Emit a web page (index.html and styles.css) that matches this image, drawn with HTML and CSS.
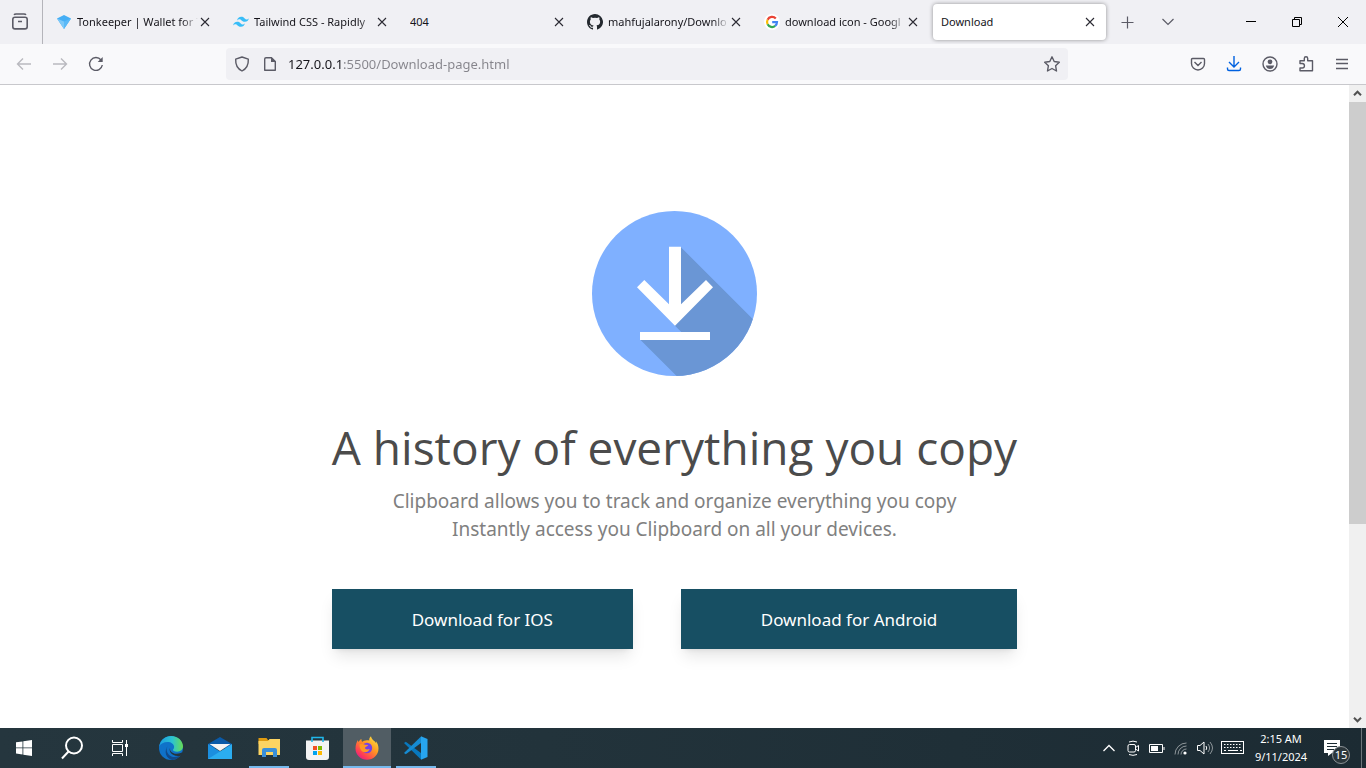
FILE: index.html
```html
<!DOCTYPE html>
<html lang="en">
<head>
<meta charset="utf-8">
<meta name="viewport" content="width=device-width, initial-scale=1">
<title>Download</title>
<link rel="stylesheet" href="styles.css">
</head>
<body>
<div class="desktop">
  <header class="tabstrip">
    <button class="view-btn" aria-label="Firefox View">
      <svg class="i18 line" viewBox="0 0 18 18"><path d="M3 1.8Q3.500 1 5 1h8q1.500 0 2 .8"/><rect x="1.800" y="4.300" width="14.400" height="11.600" rx="2.200" stroke-width="1.600"/><path d="M7 8.500h4" stroke-width="1.500"/></svg>
    </button>
    <nav class="tabs" aria-label="Tabs">
      <div class="tab">
        <svg class="i16" viewBox="0 0 16 16"><path fill="#45aef5" d="M1 4.500 8 1l7 3.500L8 15z"/><path fill="#7cc8f8" d="M1 4.500 8 7.500V15z"/><path fill="#5ab9f7" d="M15 4.500 8 7.500V15z"/></svg>
        <a class="tab-title fade" href="#">Tonkeeper | Wallet for T</a>
        <button class="tab-close" aria-label="Close tab"><svg class="i10 dark" viewBox="0 0 10 10"><path d="m1 1 8 8M9 1 1 9"/></svg></button>
      </div>
      <div class="tab">
        <svg class="i16" viewBox="0 0 16 16"><path fill="#38bdf8" d="M4 6.400Q5 2.800 8.200 2.800c3 0 3.400 2.300 5 2.600Q14.800 5.700 16 4.200 15 7.800 11.900 7.800c-3.100 0-3.400-2.300-5-2.600Q5.300 4.900 4 6.400zM0 11.400q1-3.600 4.200-3.600c3 0 3.400 2.300 5 2.600q1.600.3 2.800-1.200-1 3.600-4.100 3.600c-3.100 0-3.400-2.300-5-2.600Q1.300 9.900 0 11.400z"/></svg>
        <a class="tab-title fade" href="#">Tailwind CSS - Rapidly</a>
        <button class="tab-close" aria-label="Close tab"><svg class="i10 dark" viewBox="0 0 10 10"><path d="m1 1 8 8M9 1 1 9"/></svg></button>
      </div>
      <div class="tab">
        <a class="tab-title" href="#">404</a>
        <button class="tab-close" aria-label="Close tab"><svg class="i10 dark" viewBox="0 0 10 10"><path d="m1 1 8 8M9 1 1 9"/></svg></button>
      </div>
      <div class="tab">
        <svg class="i16" viewBox="0 0 16 16"><path fill="#24292f" d="M8 0C3.580 0 0 3.580 0 8c0 3.540 2.290 6.530 5.470 7.590.4.070.55-.17.55-.38v-1.490C4 14.090 3.480 13.220 3.320 12.770c-.09-.23-.48-.94-.82-1.130-.28-.15-.68-.52-.01-.53.63-.01 1.080.58 1.230.82.72 1.210 1.870.87 2.330.66.07-.52.28-.87.51-1.070-1.780-.2-3.640-.89-3.640-3.950 0-.87.31-1.590.82-2.150-.08-.2-.36-1.020.08-2.120 0 0 .67-.21 2.200.82a7.500 7.500 0 0 1 4 0c1.530-1.040 2.200-.82 2.200-.82.44 1.100.16 1.920.08 2.120.51.56.82 1.270.82 2.150 0 3.070-1.870 3.750-3.650 3.950.29.25.54.73.54 1.480v2.200c0 .21.15.46.55.38A8 8 0 0 0 8 0z"/></svg>
        <a class="tab-title fade" href="#">mahfujalarony/Downlo</a>
        <button class="tab-close" aria-label="Close tab"><svg class="i10 dark" viewBox="0 0 10 10"><path d="m1 1 8 8M9 1 1 9"/></svg></button>
      </div>
      <div class="tab">
        <svg class="i16" viewBox="0 0 16 16"><circle cx="8" cy="8" r="8" fill="#fff"/><g fill="none" stroke-width="2.200"><path stroke="#ea4335" d="M11.800 4.500A5 5 0 0 0 3.600 5.700"/><path stroke="#fbbc05" d="M3.600 5.700a5 5 0 0 0 0 4.600"/><path stroke="#34a853" d="M3.600 10.300a5 5 0 0 0 7.600 1.600"/><path stroke="#4285f4" d="M11.200 11.900Q13 10.400 13 8.100H8.200"/></g></svg>
        <a class="tab-title fade" href="#">download icon - Googl</a>
        <button class="tab-close" aria-label="Close tab"><svg class="i10 dark" viewBox="0 0 10 10"><path d="m1 1 8 8M9 1 1 9"/></svg></button>
      </div>
      <div class="tab active">
        <a class="tab-title" href="#" aria-current="page">Download</a>
        <button class="tab-close" aria-label="Close tab"><svg class="i10 dark" viewBox="0 0 10 10"><path d="m1 1 8 8M9 1 1 9"/></svg></button>
      </div>
    </nav>
    <div class="tab-tools">
      <button class="tool" aria-label="New tab"><svg class="i16 line thin" viewBox="0 0 16 16"><path d="M7.500 2.500v12M1.500 8.500h12"/></svg></button>
      <button class="tool" aria-label="List all tabs"><svg class="i16 line thin" viewBox="0 0 16 16"><path d="m2.500 5 5.500 5.500L13.500 5"/></svg></button>
    </div>
    <div class="window-controls">
      <button class="win" aria-label="Minimize"><svg class="i12 black" viewBox="0 0 12 12"><path d="M1 5.500h10"/></svg></button>
      <button class="win" aria-label="Restore"><svg class="i12 black" viewBox="0 0 12 12"><path d="M1.500 3.500h7v7h-7zM3.500 3.500v-2h7v7h-2"/></svg></button>
      <button class="win" aria-label="Close window"><svg class="i12 black" viewBox="0 0 12 12"><path d="m1 1 10 10M11 1 1 11"/></svg></button>
    </div>
  </header>

  <div class="navbar">
    <div class="nav-group">
      <button class="tool" aria-label="Back"><svg class="i16 line faded" viewBox="0 0 16 16"><path d="M15 8H1.500M7 2.500 1.500 8 7 13.500"/></svg></button>
      <button class="tool" aria-label="Forward"><svg class="i16 line faded" viewBox="0 0 16 16"><path d="M1 8h13.500M9 2.500 14.500 8 9 13.500"/></svg></button>
      <button class="tool" aria-label="Reload"><svg class="i16 line" viewBox="0 0 16 16"><path d="M13 4A6.400 6.400 0 1 0 14.300 9"/><path d="M14.700 1v5H9.700z" fill="#5b5b66" stroke="none"/></svg></button>
    </div>
    <div class="urlbar">
      <svg class="i16 line" viewBox="0 0 16 16"><path d="M8 1 14.300 3.200Q14.800 11.500 8 15 1.200 11.500 1.700 3.200z" stroke-linejoin="round"/></svg>
      <svg class="i16 line" viewBox="0 0 16 16"><path d="M4 1.700h5.500L13.300 5.500v8.800H2.700V3q0-1.300 1.300-1.300z" stroke-linejoin="round"/><path d="M9 1v5h5z" fill="#5b5b66" stroke="none"/></svg>
      <input class="url" type="text" aria-label="Address" value="127.0.0.1:5500/Download-page.html">
      <button class="star" aria-label="Bookmark this page"><svg class="i16 line" viewBox="0 0 16 16"><path stroke-linejoin="round" d="m8 .8 2.200 4.700 5.100.7-3.700 3.500.9 5.300L8 12.500l-4.500 2.500.9-5.300L.7 6.200l5.100-.7z"/></svg></button>
    </div>
    <div class="nav-group">
      <button class="tool" aria-label="Save to Pocket"><svg class="i16 line" viewBox="0 0 16 16"><path d="M2.500 2.500h11q1 0 1 1V7.500a6.500 6.500 0 0 1-13 0v-4q0-1 1-1zM4.500 6 8 9.500 11.500 6"/></svg></button>
      <button class="tool" aria-label="Downloads"><svg class="i16 line accent" viewBox="0 0 16 16"><path d="M8 0v10.500M3 6l5 5 5-5M1.500 11.500v1.500q0 1.500 1.500 1.500h10q1.500 0 1.500-1.500v-1.500"/></svg></button>
      <button class="tool" aria-label="Account"><svg class="i16 line" viewBox="0 0 16 16"><circle cx="8" cy="8" r="7"/><circle cx="8" cy="5.800" r="2.400" fill="#5b5b66" stroke="none"/><path d="M3.800 9.500h8.400q-1 3.500-4.200 3.500t-4.200-3.500z" fill="#5b5b66" stroke="none"/></svg></button>
      <button class="tool" aria-label="Extensions"><svg class="i16 line" viewBox="0 0 16 16"><path stroke-linejoin="round" d="M2 7.500V4.700h4.300V2.500a1.700 1.700 0 0 1 3.400 0v2.200h4.800v10H2V12h2.200a2.200 2.200 0 0 0 0-4.500z"/></svg></button>
      <button class="tool" aria-label="Menu"><svg class="i16 line" viewBox="0 0 16 16"><path d="M2 3.500h12M2 7.500h12M2 12.500h12"/></svg></button>
    </div>
  </div>

  <div class="viewport">
    <main class="page">
      <section class="hero">
        <svg class="hero-icon" viewBox="0 0 165 165" role="img" aria-label="Download">
          <defs><clipPath id="disc"><circle cx="82.500" cy="82.500" r="82.500"/></clipPath></defs>
          <g clip-path="url(#disc)">
            <path fill="#7fb0ff" d="M0 0h165v165H0z"/>
            <path fill="#6a96d5" d="M83 36h5.700L200 147.300V280L48 128.500l70 .5v-8H89.300L83 114.700z"/>
          </g>
          <path fill="#fff" d="M77 35.700h12v57.600L114 69l7 7.300-38 38.400-38-38.400 7.300-7.300L77 93.300zM48 121h70v8H48z"/>
        </svg>
        <h1 class="headline">A history of everything you copy</h1>
        <p class="lead">Clipboard allows you to track and organize everything you copy<br>Instantly access you Clipboard on all your devices.</p>
        <div class="actions">
          <button class="cta">Download for IOS</button>
          <button class="cta">Download for Android</button>
        </div>
      </section>
    </main>
    <div class="scrollbar">
      <button class="scroll-arrow" aria-label="Scroll up"><svg class="i9" viewBox="0 0 9 9"><path d="m1 6.200 3.500-3.500L8 6.200"/></svg></button>
      <div class="scroll-track"><div class="scroll-thumb"></div></div>
      <button class="scroll-arrow" aria-label="Scroll down"><svg class="i9" viewBox="0 0 9 9"><path d="m1 2.800 3.500 3.500L8 2.800"/></svg></button>
    </div>
  </div>

  <footer class="taskbar">
    <div class="system-apps">
      <button class="app" aria-label="Start"><svg class="i16" viewBox="0 0 16 16"><path fill="#fff" d="M0 2.300 6.500 1.400v6.100H0zM7.300 1.200 16 0v7.500H7.300zM0 8.300h6.500v6.200L0 13.600zM7.300 8.300H16V16l-8.700-1.300z"/></svg></button>
      <button class="app" aria-label="Search"><svg class="i24" viewBox="0 0 24 24" fill="none" stroke="#fff" stroke-width="2"><circle cx="14" cy="9.500" r="8"/><path d="M8.500 15.500 2 22.500"/></svg></button>
      <button class="app" aria-label="Task view"><svg class="i18" viewBox="0 0 18 18" fill="none" stroke="#fff"><path d="M1.500 1v2.500h10V1M1.500 17v-2.500h10V17M1.500 5.500h10v7h-10zM15.500 1v16"/><path fill="#fff" stroke="none" d="M14 5h3v3h-3z"/></svg></button>
    </div>
    <div class="pinned-apps">
      <button class="app" aria-label="Microsoft Edge"><svg class="i24" viewBox="0 0 24 24"><defs><linearGradient id="edgeTop" x1="0" x2="1"><stop offset="0" stop-color="#1b9de2"/><stop offset=".55" stop-color="#2cc3d0"/><stop offset="1" stop-color="#67dc53"/></linearGradient></defs><circle cx="12" cy="12" r="12" fill="#0f72c9"/><path fill="url(#edgeTop)" d="M.2 10.500C1.500 3.500 6.500 0 12 0c7.500 0 12 5.500 12 10.300 0 3.500-2.600 5.400-5.700 5.400-3 0-4.600-1-4.300-1.900.3-.7 1.100-1.200 1.100-3 0-2.700-3-4.800-6.600-4.800C4.800 6 1.600 7.700.2 10.500z"/><path fill="#114a8b" d="M9.500 9.300c-3.300 3-2 9.200 3 11.200 3.500 1.300 7 .2 9.600-1.900-2.100 3.500-5.400 5.400-9 5.400-5.600-1-9.300-8.700-3.600-14.700z"/><path fill="#25343c" d="M11.500 11.300c-1.700 2.800 1.200 6.400 5.600 6.500 3 .1 5-.9 6-1.500l1 1.800-1.600 1.400c-3 1-6 .7-8.500-.7-3.100-1.800-4.300-5.200-2.500-7.500z"/></svg></button>
      <button class="app" aria-label="Mail"><svg class="i24" viewBox="0 0 24 24"><path fill="#0a5aa8" d="M12 1 24 8v4H0V8z"/><path fill="#1b8fe0" d="M0 8l24 15H0z"/><path fill="#2badf0" d="M24 8v15H0z"/><path fill="#f4f4f4" d="M1.500 8h21L12 15z"/></svg></button>
      <button class="app open" aria-label="File Explorer"><svg class="i24" viewBox="0 0 24 24"><path fill="#e09b10" d="M1.500 2h8l1.500 2H23v4H1.500z"/><path fill="#fcd462" d="M1.500 5H11l1.500-2H23v16H1.500z"/><path fill="#3a8fd8" d="M7 12h11q2 0 2 2v7h-4v-5H9v5H5v-7q0-2 2-2z"/></svg></button>
      <button class="app" aria-label="Microsoft Store"><svg class="i24" viewBox="0 0 24 24"><path fill="#f3f3f3" d="M0 4.500h23V21q0 3-3 3H3q-3 0-3-3z"/><path d="M6 6V1.500h11V6" fill="none" stroke="#20b7ea" stroke-width="1.600"/><path fill="#f25022" d="M7 10h4v4H7z"/><path fill="#7fba00" d="M12 10h4v4h-4z"/><path fill="#00a4ef" d="M7 15h4v4H7z"/><path fill="#ffb900" d="M12 15h4v4h-4z"/></svg></button>
      <button class="app current" aria-label="Firefox"><svg class="i24" viewBox="0 0 24 24"><defs><linearGradient id="fox" x1="1" y1="0" x2=".2" y2="1"><stop offset="0" stop-color="#fff24a"/><stop offset=".45" stop-color="#ff9a22"/><stop offset=".8" stop-color="#ff4151"/><stop offset="1" stop-color="#e3178e"/></linearGradient></defs><path fill="url(#fox)" d="M16 .3c-1.500 1.200-2 3-1.700 4.300C10 3.800 8.200 5.300 7.500 5.800 6.500 5.600 6.300 3.800 6.500 3 5 3.700 4 5 3.500 6c-.5-.8-.6-1.700-.6-2C1.500 6 .5 9 .5 12.500a11.500 11.200 0 0 0 23 0c0-2.700-1-5.400-2.600-7.200l.3 2C20 4.800 16.500 4 16 .3z"/><circle cx="12" cy="12" r="5.200" fill="#7542e5"/><path fill="#ff9824" d="M4.500 8.500c2-1 4.700-.3 5.500.3l3 .2c0 1.600-3 1.800-3 2.800 0 1.800 2.700 2.200 4.700 1-1 3.600-5 4.200-7.400 2.700Q4.500 13 4.500 8.500z"/></svg></button>
      <button class="app open" aria-label="Visual Studio Code"><svg class="i24" viewBox="0 0 24 24"><path fill="#0878be" d="m0 7 1.800-1.200L17 17v6.500z"/><path fill="#168bd2" d="m0 17 1.800 1.300L17 7V.5z"/><path fill="#27a5ef" d="M17 .2 23.500 3v18L17 23.800z"/></svg></button>
    </div>
    <div class="tray">
      <button class="tray-btn" aria-label="Show hidden icons"><svg class="i16 light" viewBox="0 0 16 16"><path stroke-width="1.300" d="m2.500 11 5.500-5.500L13.500 11"/></svg></button>
      <button class="tray-btn" aria-label="Meet Now"><svg class="i16 light" viewBox="0 0 16 16"><rect x="3" y="4.500" width="7.500" height="7.500" rx="1.500"/><path d="m10.500 7.500 3-2v5.500l-3-2M4 2Q8 .3 12 2M4 14.500q4 1.700 8 0"/></svg></button>
      <button class="tray-btn" aria-label="Battery"><svg class="i16 light" viewBox="0 0 16 16"><path d="M.5 4.500h13v8H.5zM15 7v3"/><path d="M2 6h7v5H2z" fill="#fff" stroke="none"/></svg></button>
      <button class="tray-btn" aria-label="Network"><svg class="i16 light" viewBox="0 0 16 16"><g opacity=".5"><path d="M2 14.500A11.500 11.500 0 0 1 13.500 3M5 14.500A8.500 8.500 0 0 1 13.500 6M8 14.500A5.500 5.500 0 0 1 13.500 9"/></g><circle cx="12" cy="13" r="1.600" fill="#fff" stroke="none"/></svg></button>
      <button class="tray-btn" aria-label="Volume"><svg class="i16 light" viewBox="0 0 16 16"><path d="M.5 5.500h2.500l4-3.500v12l-4-3.500H.5zM9 6q1.500 2 0 4"/><path opacity=".5" d="M11 4q3.200 4 0 8M13 2q5 6 0 12"/></svg></button>
      <button class="tray-btn keyboard" aria-label="Touch keyboard"><svg class="key-icon light" viewBox="0 0 24 16"><rect x=".5" y="1.500" width="22" height="12"/><path d="M3 4.500h18M3 7.500h18" stroke-dasharray="1.500 1.500"/><path d="M3 10.500h2m2 0h10m2 0h2"/></svg></button>
      <button class="clock"><span>2:15 AM</span><span>9/11/2024</span></button>
      <button class="notices" aria-label="15 new notifications"><svg class="i18" viewBox="0 0 18 18"><path fill="#fff" d="M1 1h16v13H9l-4 3v-3H1z"/><path stroke="#1c2b33" d="M4 4.500h10M4 7.500h10M4 10.500h7"/></svg><span class="badge">15</span></button>
    </div>
  </footer>
</div>
</body>
</html>
```
FILE: styles.css
```css
* { box-sizing: border-box; }

body {
  margin: 0;
  font-family: "Noto Sans", "Open Sans", sans-serif;
  color: #15141a;
  background: #fff;
}

button {
  margin: 0;
  padding: 0;
  border: 0;
  background: none;
  color: inherit;
  font: inherit;
}

svg { display: block; flex: none; }

.i9 { width: 9px; height: 9px; fill: none; stroke: #505050; stroke-width: 2; }
.i10 { width: 10px; height: 10px; }
.i12 { width: 12px; height: 12px; }
.i16 { width: 16px; height: 16px; }
.i18 { width: 18px; height: 18px; }
.i24 { width: 24px; height: 24px; }

.line { fill: none; stroke: #5b5b66; stroke-width: 1.4; }
.thin { stroke-width: 1.2; }
.dark { fill: none; stroke: #2b2a33; stroke-width: 1.1; }
.black { fill: none; stroke: #000; stroke-width: 1; }
.light { fill: none; stroke: #fff; stroke-width: 1; }
.faded { opacity: 0.4; }
.accent { stroke: #0061e0; }

.desktop {
  display: flex;
  flex-direction: column;
  height: 100vh;
  overflow: hidden;
}

/* Tab strip */
.tabstrip {
  display: flex;
  flex: none;
  height: 44px;
  background: #f0f0f4;
}

.view-btn {
  display: flex;
  align-items: center;
  justify-content: center;
  flex: none;
  width: 43px;
  padding-right: 2px;
  border-right: 1px solid #b4b4ba;
}

.tabs {
  display: flex;
  flex: 0 1 1065px;
  min-width: 0;
  padding-left: 3px;
}

.tab {
  display: flex;
  align-items: center;
  flex: 1 1 0;
  min-width: 0;
  gap: 5px;
  margin: 4px 2px;
  padding: 0 11px 0 8px;
  border-radius: 4px;
}

.tab.active {
  background: #fff;
  box-shadow: 0 0 4px rgba(0, 0, 0, 0.4);
}

.tab-title {
  flex: 1;
  min-width: 0;
  overflow: hidden;
  color: inherit;
  font-size: 11px;
  line-height: 20px;
  text-decoration: none;
  white-space: nowrap;
}

.fade {
  -webkit-mask-image: linear-gradient(to left, transparent, #000 16px);
  mask-image: linear-gradient(to left, transparent, #000 16px);
}

.tab-close {
  flex: none;
  width: 10px;
  height: 10px;
  margin-left: -3px;
}

.tab-tools {
  display: flex;
  align-items: center;
  gap: 8px;
  padding-left: 4px;
}

.tool {
  display: flex;
  align-items: center;
  justify-content: center;
  flex: none;
  width: 32px;
  height: 32px;
}

.window-controls { display: flex; margin-left: auto; }

.win {
  display: flex;
  align-items: center;
  justify-content: center;
  width: 46px;
}

/* Navigation bar */
.navbar {
  display: flex;
  align-items: center;
  justify-content: space-between;
  flex: none;
  gap: 114px;
  height: 41px;
  padding: 0 8px;
  border-bottom: 1px solid #c8c8cc;
  background: #f9f9fb;
}

.nav-group { display: flex; gap: 4px; }

.urlbar {
  display: flex;
  align-items: center;
  flex: 1;
  gap: 12px;
  min-width: 0;
  height: 32px;
  padding: 0 8px;
  border-radius: 4px;
  background: #f0f0f4;
}

.url {
  flex: 1;
  min-width: 0;
  height: 32px;
  margin-left: -2px;
  padding: 0;
  border: 0;
  outline: 0;
  background: linear-gradient(to right, #15141a 55px, #85848b 55px);
  -webkit-background-clip: text;
  background-clip: text;
  color: transparent;
  font: inherit;
  font-size: 13px;
}

/* Page */
.viewport {
  display: flex;
  flex: 1;
  min-height: 0;
}

.page {
  display: flex;
  justify-content: center;
  flex: 1;
  min-width: 0;
  overflow: hidden;
}

.hero {
  display: flex;
  flex-direction: column;
  align-items: center;
  padding-top: 126px;
  text-align: center;
}

.hero-icon { width: 165px; height: 165px; }

.headline {
  margin: 47px 0 0;
  color: #4b4b4b;
  font-family: "Open Sans", "Noto Sans", sans-serif;
  font-size: 46px;
  font-weight: 400;
  line-height: 48px;
  white-space: nowrap;
}

.lead {
  margin: 16px 0 0;
  color: #808080;
  font-size: 19px;
  line-height: 28px;
}

.actions {
  display: flex;
  gap: 48px;
  align-self: stretch;
  margin-top: 46px;
}

.cta {
  flex: 1 1 auto;
  height: 60px;
  background: #174f63;
  box-shadow: 0 10px 15px -3px rgba(0, 0, 0, 0.1), 0 4px 6px -4px rgba(0, 0, 0, 0.1);
  color: #fff;
  font-size: 17px;
}

/* Scrollbar */
.scrollbar {
  display: flex;
  flex-direction: column;
  flex: none;
  width: 17px;
  background: #f0f0f0;
}

.scroll-arrow {
  display: flex;
  align-items: center;
  justify-content: center;
  flex: none;
  height: 17px;
}

.scroll-track { flex: 1; }
.scroll-thumb { height: 69.3%; background: #cdcdcd; }

/* Taskbar */
.taskbar {
  display: flex;
  flex: none;
  height: 40px;
  background: linear-gradient(to right, #25363e, #22333b 40%, #1c2b33);
  color: #fff;
}

.system-apps { display: flex; }
.pinned-apps { display: flex; gap: 1px; padding-left: 3px; }

.app {
  display: flex;
  align-items: center;
  justify-content: center;
  width: 48px;
}

.open { background: linear-gradient(#76b9ed, #76b9ed) center bottom / 40px 2px no-repeat; }
.current { background: #515d64; box-shadow: inset 0 -2px #76b9ed; }

.tray {
  display: flex;
  align-items: center;
  margin-left: auto;
  margin-right: 4px;
  padding-right: 6px;
  border-right: 1px solid #6b767b;
}

.tray-btn {
  display: flex;
  align-items: center;
  justify-content: center;
  width: 24px;
  height: 40px;
}

.keyboard { width: 32px; }
.key-icon { width: 24px; height: 16px; }

.clock {
  display: flex;
  flex-direction: column;
  align-items: center;
  width: 64px;
  font-size: 11px;
  line-height: 18px;
}

.notices {
  position: relative;
  display: flex;
  align-items: center;
  justify-content: flex-start;
  width: 42px;
  height: 40px;
  padding-left: 10px;
}

.badge {
  position: absolute;
  right: 5px;
  bottom: 4px;
  width: 18px;
  height: 18px;
  border: 1px solid #8b9296;
  border-radius: 50%;
  background: #2b363b;
  font-size: 11px;
  line-height: 16px;
  text-align: center;
}
```
